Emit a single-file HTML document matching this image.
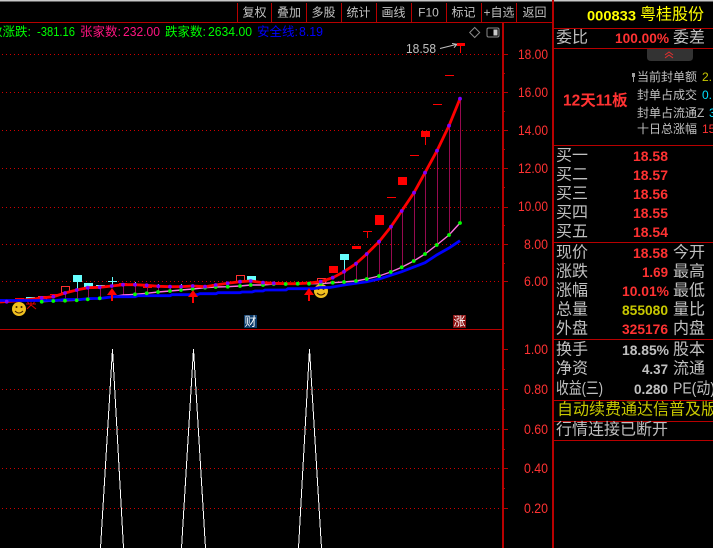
<!DOCTYPE html>
<html><head><meta charset="utf-8"><style>
html,body{margin:0;padding:0;background:#000;width:713px;height:548px;overflow:hidden}
svg{display:block;position:absolute;left:0;top:0}
text{font-family:"Liberation Sans","WenQuanYi Zen Hei","Noto Sans CJK SC",sans-serif;dominant-baseline:central}
.t{font-size:12px;fill:#c0c0c0;text-anchor:middle}
.l{font-size:16px;fill:#c0c0c0}
.n{font-size:14px;font-weight:bold;fill:#ff3232}
.a{font-size:13.5px;fill:#ff3232}
.h{font-size:12.5px}
.s{font-size:12px;fill:#c0c0c0}
</style></head><body>
<svg width="713" height="548" viewBox="0 0 713 548">
<rect width="713" height="548" fill="#000"/>
<rect width="713" height="1.5" fill="#c8c8c8"/>
<!-- dotted grid -->
<g stroke="#d00000" stroke-width="1" stroke-dasharray="1 3" shape-rendering="crispEdges">
<path d="M2 54.5H503M2 92.5H503M2 130.5H503M2 168.5H503M2 207.5H503M2 244.5H503M2 281.5H503M2 389.5H503M2 429.5H503M2 468.5H503M2 508.5H503"/>
</g>
<!-- frame -->
<g fill="#b80000">
<rect x="0" y="22" width="553" height="1"/>
<rect x="0" y="329" width="503" height="1"/>
<rect x="502" y="22" width="2" height="526"/>
<rect x="552" y="0" width="2" height="548"/>
<rect x="237" y="3" width="1" height="19"/><rect x="271" y="3" width="1" height="19"/><rect x="306" y="3" width="1" height="19"/><rect x="341" y="3" width="1" height="19"/><rect x="376" y="3" width="1" height="19"/><rect x="411" y="3" width="1" height="19"/><rect x="446" y="3" width="1" height="19"/><rect x="481" y="3" width="1" height="19"/><rect x="516" y="3" width="1" height="19"/>
<rect x="553" y="28" width="160" height="1"/><rect x="553" y="48" width="160" height="1"/><rect x="553" y="145" width="160" height="1"/><rect x="553" y="242" width="160" height="1"/><rect x="553" y="339" width="160" height="1"/><rect x="553" y="400" width="160" height="1"/><rect x="553" y="421" width="160" height="1"/><rect x="553" y="440" width="160" height="1"/>
<path d="M503 54h5v1h-5zM503 92h5v1h-5zM503 130h5v1h-5zM503 168h5v1h-5zM503 207h5v1h-5zM503 244h5v1h-5zM503 281h5v1h-5zM503 349h5v1h-5zM503 389h5v1h-5zM503 429h5v1h-5zM503 468h5v1h-5zM503 508h5v1h-5zM503 73h2v1h-2zM503 111h2v1h-2zM503 149h2v1h-2zM503 187h2v1h-2zM503 225h2v1h-2zM503 263h2v1h-2zM503 369h2v1h-2zM503 409h2v1h-2zM503 449h2v1h-2zM503 488h2v1h-2z"/>
</g>
<!-- toolbar -->
<text class="t" x="254.500" y="12.500">复权</text><text class="t" x="289" y="12.500">叠加</text><text class="t" x="323.500" y="12.500">多股</text><text class="t" x="358.500" y="12.500">统计</text><text class="t" x="393.500" y="12.500">画线</text><text class="t" x="428.500" y="12.500">F10</text><text class="t" x="463.500" y="12.500">标记</text><text class="t" x="499" y="12.500">+自选</text><text class="t" x="534.500" y="12.500">返回</text>
<!-- top legend -->
<g class="h">
<text class="h" x="-10" y="32" fill="#00ff00">数涨跌:</text><text class="h" x="37" y="32" fill="#00ff00" textLength="38" lengthAdjust="spacingAndGlyphs">-381.16</text>
<text class="h" x="80" y="32" fill="#ff1480">张家数:</text><text class="h" x="123" y="32" fill="#ff1480" textLength="37" lengthAdjust="spacingAndGlyphs">232.00</text>
<text class="h" x="165" y="32" fill="#00ff00">跌家数:</text><text class="h" x="208" y="32" fill="#00ff00" textLength="44" lengthAdjust="spacingAndGlyphs">2634.00</text>
<text class="h" x="257" y="32" fill="#0000ff">安全线:</text><text class="h" x="299" y="32" fill="#0000ff" textLength="24" lengthAdjust="spacingAndGlyphs">8.19</text>
</g>
<!-- axis labels -->
<text class="a" x="518" y="54.500" textLength="30" lengthAdjust="spacingAndGlyphs">18.00</text><text class="a" x="518" y="92.500" textLength="30" lengthAdjust="spacingAndGlyphs">16.00</text><text class="a" x="518" y="130.500" textLength="30" lengthAdjust="spacingAndGlyphs">14.00</text><text class="a" x="518" y="168.500" textLength="30" lengthAdjust="spacingAndGlyphs">12.00</text><text class="a" x="518" y="206.500" textLength="30" lengthAdjust="spacingAndGlyphs">10.00</text><text class="a" x="524" y="244.500" textLength="24" lengthAdjust="spacingAndGlyphs">8.00</text><text class="a" x="524" y="281.500" textLength="24" lengthAdjust="spacingAndGlyphs">6.00</text>
<text class="a" x="524" y="349.500" textLength="24" lengthAdjust="spacingAndGlyphs">1.00</text><text class="a" x="524" y="389.500" textLength="24" lengthAdjust="spacingAndGlyphs">0.80</text><text class="a" x="524" y="429.500" textLength="24" lengthAdjust="spacingAndGlyphs">0.60</text><text class="a" x="524" y="468.500" textLength="24" lengthAdjust="spacingAndGlyphs">0.40</text><text class="a" x="524" y="508.500" textLength="24" lengthAdjust="spacingAndGlyphs">0.20</text>
<!-- icons top right of chart -->
<path d="M474.700 27.500l5 5-5 5-5-5z" fill="none" stroke="#8a8a8a"/>
<rect x="487" y="28" width="12" height="9" rx="1.500" fill="none" stroke="#8a8a8a"/><rect x="493.500" y="29.500" width="4" height="6" fill="#c8c8c8"/>
<text x="406" y="48.500" font-size="13" fill="#c0c0c0" textLength="30" lengthAdjust="spacingAndGlyphs">18.58</text>
<path d="M440 48.500L458 44M452 43.500l5 .7-3 3.500" fill="none" stroke="#c0c0c0" stroke-width="1"/>
<!-- smileys -->
<g><circle cx="19" cy="309" r="7" fill="#f0c020"/><circle cx="16.500" cy="307" r="1" fill="#402000"/><circle cx="21.500" cy="307" r="1" fill="#402000"/><path d="M15 311q4 4 8 0" fill="none" stroke="#402000"/></g>
<g><circle cx="321" cy="291" r="7" fill="#f0c020"/><circle cx="318.500" cy="289" r="1" fill="#402000"/><circle cx="323.500" cy="289" r="1" fill="#402000"/><path d="M317 293q4 4 8 0" fill="none" stroke="#402000"/></g>
<path d="M26 304h10M31 301v4l-4 4M31 305l5 4M27 301l2 3M35 301l-2 3" fill="none" stroke="#e00000" stroke-width="1"/>
<!-- candles -->
<g shape-rendering="crispEdges">
<g fill="#66ffff">
<rect x="73" y="275" width="9" height="7"/><rect x="77" y="282" width="1" height="10"/>
<rect x="84" y="283" width="9" height="4"/><rect x="96" y="285" width="9" height="1"/><rect x="100" y="285" width="1" height="15"/>
<rect x="26" y="297" width="9" height="2"/><rect x="108" y="281" width="9" height="1"/><rect x="112" y="277" width="1" height="8"/>
<rect x="247" y="276" width="9" height="5"/><rect x="340" y="254" width="9" height="6"/><rect x="344" y="260" width="1" height="12"/>
<rect x="135" y="282" width="1" height="3"/><rect x="158" y="284" width="1" height="3"/><rect x="181" y="284" width="1" height="3"/>
</g>
<g fill="#ff0000">
<rect x="329" y="266" width="9" height="7"/><rect x="352" y="246" width="9" height="3"/><rect x="363" y="231" width="9" height="1"/><rect x="367" y="231" width="1" height="7"/>
<rect x="375" y="215" width="9" height="10"/><rect x="387" y="197" width="9" height="1"/><rect x="398" y="177" width="9" height="8"/><rect x="410" y="155" width="9" height="1"/>
<rect x="421" y="131" width="9" height="6"/><rect x="425" y="137" width="1" height="8"/><rect x="433" y="104" width="9" height="1"/><rect x="445" y="75" width="9" height="1"/>
<rect x="457" y="43" width="8" height="3"/><rect x="460" y="46" width="1" height="7"/>
<rect x="15" y="298" width="9" height="1"/><rect x="50" y="294" width="8" height="1"/><rect x="119" y="283" width="8" height="1"/><rect x="143" y="286" width="9" height="2"/><rect x="166" y="286" width="9" height="2"/><rect x="212" y="284" width="10" height="1"/><rect x="224" y="283" width="8" height="1"/>
</g>
<g fill="none" stroke="#ff3030">
<rect x="61.500" y="286.500" width="8" height="6"/><rect x="38.500" y="296.500" width="8" height="4"/><rect x="236.500" y="275.500" width="8" height="6"/><rect x="317.500" y="278.500" width="8" height="5"/>
</g>
</g>
<!-- stems -->
<path d="M344.500 272V282M356.500 264V281M367.500 254V279M379.500 242V276M391.500 227V272M402.500 211V267M414.500 193V261M425.500 173V254M437.500 151V245M449.500 126V235M460.500 99V223M65.500 293V300M77.500 290V300M88.500 288V299M100.500 287V298M123.500 285V295M135.500 285V294M147.500 285V293M158.500 286V292M170.500 287V291M181.500 287V290" stroke="#960a50" stroke-width="1" fill="none" shape-rendering="crispEdges"/>
<!-- pink MA -->
<path d="M41.700 301.700L53.300 301L65 300.700L76.700 300.300L87.700 299.300L99.700 298.300L111.700 297L123 295L135 294.300L146.700 293.300L158 292L170 291L181 290L192.700 289L205 287.700L215.700 287L227.700 286.700L240 286L250.700 285L263 285L273.700 284L285.700 284L297.700 283.700L309 283.700L320.700 283.700L332.700 282.700L344 282L356 281L366.700 279L379 276L390.700 272L401.700 267.300L413.700 261L425 254L436.700 245L449 235L460 223" fill="none" stroke="#ff70e0" stroke-width="1.400"/>
<!-- red line -->
<path d="M0 302L15 301L41.700 298L53.300 296.700L65 293L76.700 290L87.700 287.700L99.700 287.300L111.700 286L123 284.700L135 284.700L146.700 285.300L158.300 286.300L170 286.700L181 286.700L192.700 286L205 286.700L215.700 285L227.700 283.300L240 281.700L250.700 281L263 282.700L273.700 283.300L285.700 283.700L297.700 283.700L309 283L320.700 281.700L332.700 277.700L344 271.700L356 263.700L366.700 254L379 241.700L391 226.700L401.700 211L414 192.700L425 172.700L437 150.700L449 125.700L460 98.700" fill="none" stroke="#ff0000" stroke-width="2.800"/>
<!-- blue line -->
<path d="M0 300.500H55L65 299.500H80L90 298.500H100L113 296.700H135L138 295.700H170L172 294.700H197L200 293.700H216L218 292.700H240L242 292H252L255 291H263L265 290H286L288 288.700H313L320 287.500H330L344 285L366.700 281.700L379 279L401.700 271.700L425 262.700L436.700 255L449 248L460 240.700" fill="none" stroke="#0000ff" stroke-width="2.800"/>
<!-- dots -->
<path d="M41.700 301.700h0M53.300 301h0M65 300.700h0M76.700 300.300h0M87.700 299.300h0M99.700 298.300h0M135 294.300h0M146.700 293.300h0M158 292h0M170 291h0M181 290h0M192.700 289h0M205 287.700h0M215.700 287h0M227.700 286.700h0M240 286h0M250.700 285h0M263 285h0M273.700 284h0M285.700 284h0M297.700 283.700h0M309 283.700h0M320.700 283.700h0M332.700 282.700h0M344 282h0M356 281h0M366.700 279h0M379 276h0M390.700 272h0M401.700 267.300h0M413.700 261h0M425 254h0M436.700 245h0M449 235h0M460 223h0" stroke="#00ff00" stroke-width="3.800" stroke-linecap="round" fill="none"/>
<path d="M6.700 301.700h0M41.700 298h0M53.300 296.700h0M65 293h0M76.700 290h0M87.700 287.700h0M99.700 287.300h0M111.700 286h0M123 284.700h0M135 284.700h0M146.700 285.300h0M158.300 286.300h0M170 286.700h0M181 286.700h0M192.700 286h0M205 286.700h0M215.700 285h0M227.700 283.300h0M240 281.700h0M250.700 281h0M263 282.700h0M273.700 283.300h0M320.700 281.700h0M332.700 277.700h0M344 271.700h0M356 263.700h0M366.700 254h0M379 241.700h0M391 226.700h0M401.700 211h0M414 192.700h0M425 172.700h0M437 150.700h0M449 125.700h0M460 98.700h0" stroke="#8000ff" stroke-width="3.800" stroke-linecap="round" fill="none"/>
<!-- arrows -->
<path d="M112 288l5 7h-4v6h-2v-6h-4z" fill="#ff0000"/><path d="M193 290l5 7h-4v6h-2v-6h-4z" fill="#ff0000"/><path d="M309 288l5 7h-4v6h-2v-6h-4z" fill="#ff0000"/>
<!-- markers -->
<rect x="244" y="315" width="13" height="13" fill="#0a3a6a"/><text x="244.500" y="321.500" font-size="12" fill="#fff">财</text>
<rect x="453" y="315" width="13" height="13" fill="#8a1010"/><text x="453.500" y="321.500" font-size="12" fill="#fff">涨</text>
<!-- lower triangles -->
<g stroke="#fff" stroke-width="1" fill="none" shape-rendering="crispEdges">
<path d="M100.500 548L112.500 349L123.500 548"/><path d="M181.500 548L193.500 349L205.500 548"/><path d="M298.500 548L309.500 349L321.500 548"/>
</g>
<!-- right panel -->
<text x="587" y="15.500" font-size="14" font-weight="bold" fill="#ffff00" textLength="49" lengthAdjust="spacingAndGlyphs">000833</text>
<text x="640" y="15" font-size="16" fill="#ffff00">粤桂股份</text>
<text class="l" x="556" y="38">委比</text>
<text class="n" x="615" y="38" textLength="54" lengthAdjust="spacingAndGlyphs">100.00%</text>
<text class="l" x="673" y="38">委差</text>
<path d="M647 49h46v8q0 4-4 4h-38q-4 0-4-4z" fill="#333"/>
<path d="M665 55l4-3 4 3M665 58l4-3 4 3" fill="none" stroke="#e03030"/>
<text x="563" y="101" font-size="15.500" font-weight="bold" fill="#ff3232">12天11板</text>
<path d="M632 73h3v4h-1v5h-1v-5h-1z" fill="#a0a0a0"/>
<text class="s" x="637" y="77">当前封单额</text><text class="s" x="702" y="77" style="fill:#c8c800">2.</text>
<text class="s" x="637" y="95">封单占成交</text><text class="s" x="702" y="95" style="fill:#00e0ff">0.</text>
<text class="s" x="637" y="113">封单占流通Z</text><text class="s" x="709" y="113" style="fill:#00e0ff">3</text>
<text class="s" x="637" y="129">十日总涨幅</text><text class="s" x="702" y="129" style="fill:#ff3232">15</text>

<text class="l" x="556" y="156">买一</text><text class="n" x="633" y="156" textLength="35" lengthAdjust="spacingAndGlyphs">18.58</text>
<text class="l" x="556" y="175">买二</text><text class="n" x="633" y="175" textLength="35" lengthAdjust="spacingAndGlyphs">18.57</text>
<text class="l" x="556" y="194">买三</text><text class="n" x="633" y="194" textLength="35" lengthAdjust="spacingAndGlyphs">18.56</text>
<text class="l" x="556" y="213">买四</text><text class="n" x="633" y="213" textLength="35" lengthAdjust="spacingAndGlyphs">18.55</text>
<text class="l" x="556" y="232">买五</text><text class="n" x="633" y="232" textLength="35" lengthAdjust="spacingAndGlyphs">18.54</text>

<text class="l" x="556" y="253">现价</text><text class="n" x="633" y="253" textLength="35" lengthAdjust="spacingAndGlyphs">18.58</text><text class="l" x="673" y="253">今开</text>
<text class="l" x="556" y="272">涨跌</text><text class="n" x="642" y="272" textLength="26" lengthAdjust="spacingAndGlyphs">1.69</text><text class="l" x="673" y="272">最高</text>
<text class="l" x="556" y="291">涨幅</text><text class="n" x="622" y="291" textLength="47" lengthAdjust="spacingAndGlyphs">10.01%</text><text class="l" x="673" y="291">最低</text>
<text class="l" x="556" y="310">总量</text><text class="n" x="622" y="310" style="fill:#c8c800" textLength="46" lengthAdjust="spacingAndGlyphs">855080</text><text class="l" x="673" y="310">量比</text>
<text class="l" x="556" y="329">外盘</text><text class="n" x="622" y="329" textLength="46" lengthAdjust="spacingAndGlyphs">325176</text><text class="l" x="673" y="329">内盘</text>

<text class="l" x="556" y="350">换手</text><text class="n" x="622" y="350" style="fill:#c0c0c0" textLength="47" lengthAdjust="spacingAndGlyphs">18.85%</text><text class="l" x="673" y="350">股本</text>
<text class="l" x="556" y="369">净资</text><text class="n" x="642" y="369" style="fill:#c0c0c0" textLength="26" lengthAdjust="spacingAndGlyphs">4.37</text><text class="l" x="673" y="369">流通</text>
<text class="l" x="556" y="389" textLength="47" lengthAdjust="spacingAndGlyphs">收益(三)</text><text class="n" x="634" y="389" style="fill:#c0c0c0" textLength="34" lengthAdjust="spacingAndGlyphs">0.280</text><text class="l" x="673" y="389" textLength="42" lengthAdjust="spacingAndGlyphs">PE(动)</text>
<text class="l" x="557" y="410" style="fill:#c8c800">自动续费通达信普及版</text>
<text class="l" x="556" y="430">行情连接已断开</text>
</svg>
</body></html>
